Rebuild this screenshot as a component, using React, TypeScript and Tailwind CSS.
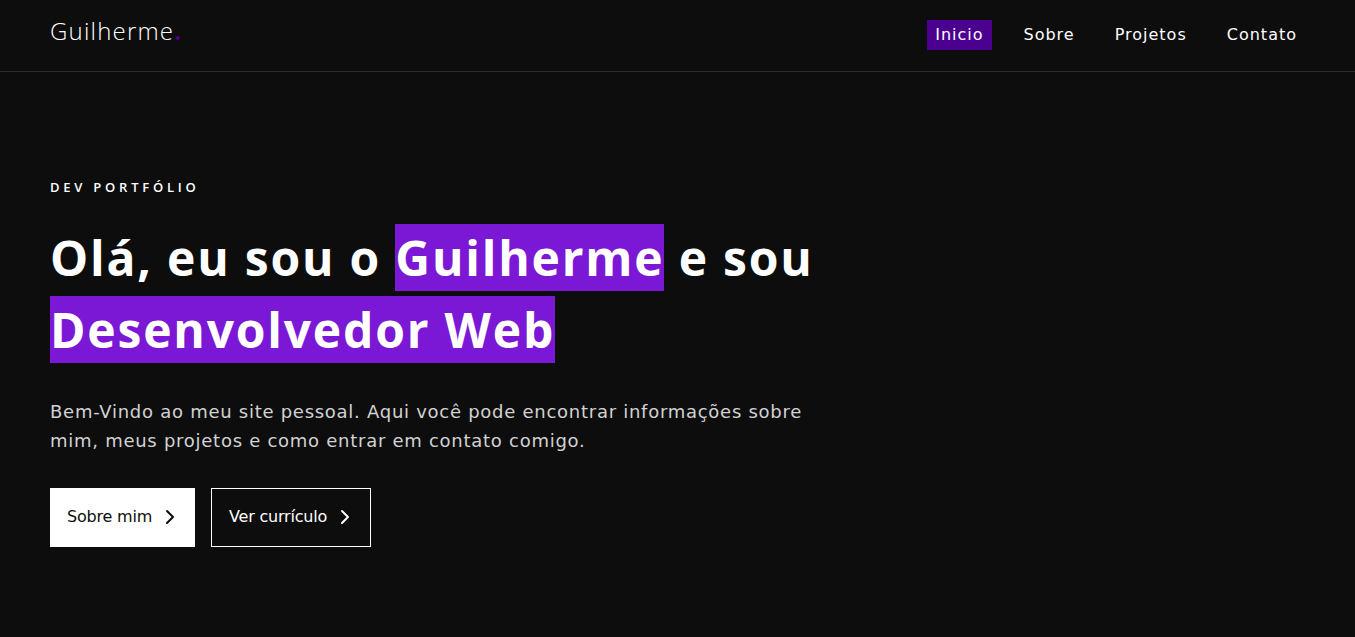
import React from 'react';
import { ChevronRight } from 'lucide-react';

const navLinks = ['Inicio', 'Sobre', 'Projetos', 'Contato'];

export default function App() {
  return (
    <div className="min-h-screen bg-[#0d0d0d] text-white font-['Open_Sans',sans-serif]">
      {/* Header */}
      <header className="h-[72px] border-b border-[#2b2b2b] px-[50px] pb-[4px] flex items-center justify-between">
        <a href="#" className="text-[24px] font-light tracking-[1.2px] text-white -mt-[6px]">
          Guilherme<span className="text-[#4b0090] font-bold">.</span>
        </a>
        <nav className="mt-[2px] flex items-center gap-6 font-['DejaVu_Sans',sans-serif]">
          {navLinks.map((link, i) => (
            <a
              key={link}
              href="#"
              className={`px-2 h-[30px] flex items-center text-[16px] tracking-[1px] ${
                i === 0 ? 'bg-[#4b0090]' : ''
              }`}
            >
              {link}
            </a>
          ))}
        </nav>
      </header>

      {/* Hero */}
      <main className="px-[50px] pt-[106px]">
        <p className="text-[13px] font-semibold tracking-[0.29em] uppercase">Dev Portfólio</p>

        <h1 className="mt-[24px] text-[48px] leading-[72px] font-bold tracking-[1.8px] max-w-[820px]">
          Olá, eu sou o <span className="bg-[#7b18d6] py-[1px]">Guilherme</span> e sou{' '}
          <span className="bg-[#7b18d6] py-[1px]">Desenvolvedor Web</span>
        </h1>

        <p className="mt-[31px] text-[18px] leading-[29px] tracking-[0.73px] text-[#d2d2d2] max-w-[775px] font-['DejaVu_Sans',sans-serif]">
          Bem-Vindo ao meu site pessoal. Aqui você pode encontrar informações sobre mim, meus projetos e como
          entrar em contato comigo.
        </p>

        <div className="mt-[33px] flex gap-4 font-['DejaVu_Sans',sans-serif]">
          <a
            href="#"
            className="h-[59px] pl-[17px] pr-[13px] flex items-center gap-[6px] bg-white text-[#0d0d0d] text-[16px] tracking-[-0.2px]"
          >
            Sobre mim
            <ChevronRight className="w-6 h-6" strokeWidth={2} />
          </a>
          <a
            href="#"
            className="h-[59px] pl-[17px] pr-[13px] flex items-center gap-[6px] border border-white text-white text-[16px] tracking-[-0.2px]"
          >
            Ver currículo
            <ChevronRight className="w-6 h-6" strokeWidth={2} />
          </a>
        </div>
      </main>
    </div>
  );
}
